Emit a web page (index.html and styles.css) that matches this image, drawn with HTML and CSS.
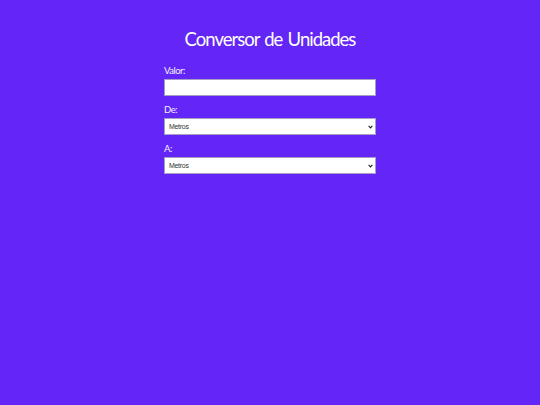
FILE: index.html
```html
<!DOCTYPE html>
<html lang="pt">
<head>
<meta charset="utf-8">
<title>Conversor de Unidades</title>
<link rel="stylesheet" href="styles.css">
</head>
<body>
<main class="container">
  <h1 class="title">Conversor de Unidades</h1>
  <form class="form">
    <label class="label" for="valor">Valor:</label>
    <input class="field" id="valor" type="number">
    <label class="label" for="de">De:</label>
    <div class="select-wrap">
      <select class="field select" id="de">
        <option>Metros</option>
        <option>Quilômetros</option>
        <option>Centímetros</option>
      </select>
      <svg class="chevron" viewBox="0 0 8 6" width="5" height="4" aria-hidden="true"><path d="M1 1.2 L4 4.4 L7 1.2" fill="none" stroke="#222" stroke-width="1.8"/></svg>
    </div>
    <label class="label" for="a">A:</label>
    <div class="select-wrap">
      <select class="field select" id="a">
        <option>Metros</option>
        <option>Quilômetros</option>
        <option>Centímetros</option>
      </select>
      <svg class="chevron" viewBox="0 0 8 6" width="5" height="4" aria-hidden="true"><path d="M1 1.2 L4 4.4 L7 1.2" fill="none" stroke="#222" stroke-width="1.8"/></svg>
    </div>
  </form>
</main>
</body>
</html>
```
FILE: styles.css
```css
html, body {
  margin: 0;
  padding: 0;
  height: 100%;
}
body {
  background: #6326f6;
  font-family: "Lato", "Noto Sans", sans-serif;
  color: #ffffff;
}
.container {
  width: 212px;
  margin: 0 auto;
  padding-top: 28px;
}
.title {
  margin: 0 0 15px;
  text-align: center;
  font-size: 18.5px;
  font-weight: 400;
  letter-spacing: -1px;
  word-spacing: 1.5px;
  white-space: nowrap;
  line-height: 22px;
}
.form {
  display: flex;
  flex-direction: column;
}
.label {
  font-size: 9.5px;
  line-height: 12px;
  margin-bottom: 2px;
  letter-spacing: -0.5px;
  color: #f4efff;
}
.field {
  box-sizing: border-box;
  width: 212px;
  height: 17px;
  margin: 0 0 8px;
  border: 1px solid #a79ec6;
  background: #ffffff;
  font-family: "Liberation Sans", Arial, sans-serif;
  font-size: 7px;
  color: #333;
  padding: 0 4px;
  outline: none;
}
.select-wrap {
  position: relative;
  width: 212px;
}
.select {
  display: block;
  appearance: none;
  -webkit-appearance: none;
  border-radius: 0;
  letter-spacing: -0.3px;
}
.chevron {
  position: absolute;
  right: 3px;
  top: 6.5px;
  pointer-events: none;
}
```
